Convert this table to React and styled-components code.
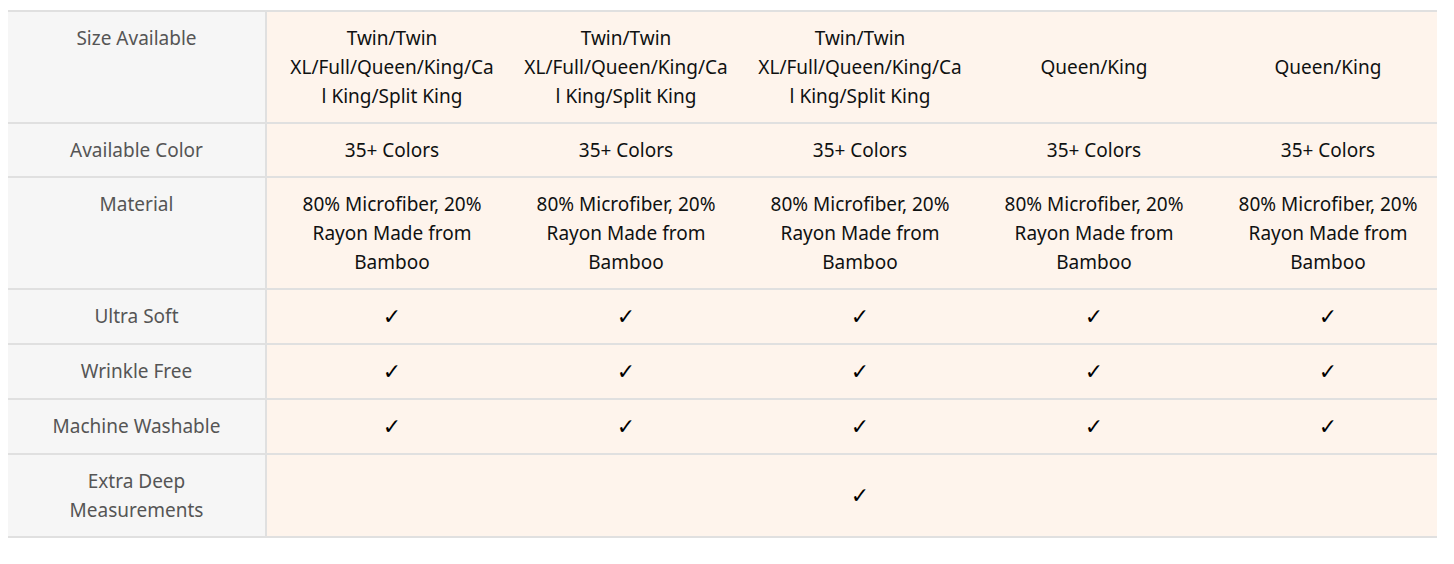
import styled, { createGlobalStyle } from "styled-components";

const Global = createGlobalStyle`
  body {
    margin: 8px;
    background: #fff;
    font-family: "Noto Sans", "DejaVu Sans", sans-serif;
  }
`;

const sizes = ["Twin/Twin", "XL/Full/Queen/King/Ca", "l King/Split King"];
const material = "80% Microfiber, 20% Rayon Made from Bamboo";

const rows = [
  { label: "Size Available", cells: [sizes, sizes, sizes, "Queen/King", "Queen/King"] },
  { label: "Available Color", cells: Array(5).fill("35+ Colors") },
  { label: "Material", cells: Array(5).fill(material) },
  { label: "Ultra Soft", cells: Array(5).fill("✓") },
  { label: "Wrinkle Free", cells: Array(5).fill("✓") },
  { label: "Machine Washable", cells: Array(5).fill("✓") },
  { label: "Extra Deep Measurements", cells: ["", "", "✓", "", ""] },
];

function renderCell(c) {
  if (c === "✓") return <Check>✓</Check>;
  if (Array.isArray(c))
    return c.map((line, i) => (
      <Line key={i}>{line}</Line>
    ));
  return c;
}

export default function App() {
  return (
    <>
      <Global />
      <Wrap>
        <Table>
          <colgroup>
            <col style={{ width: 259 }} />
            {Array.from({ length: 5 }).map((_, i) => (
              <col key={i} style={{ width: 234 }} />
            ))}
          </colgroup>
          <tbody>
            {rows.map((row) => (
              <tr key={row.label}>
                <Label>{row.label}</Label>
                {row.cells.map((c, i) => (
                  <Cell key={i}>{renderCell(c)}</Cell>
                ))}
              </tr>
            ))}
          </tbody>
        </Table>
      </Wrap>
    </>
  );
}

const Wrap = styled.div`
  padding-top: 2px;
`;

const Table = styled.table`
  width: 1429px;
  table-layout: fixed;
  border-collapse: separate;
  border-spacing: 0;
  border-top: 2px solid #e0e0e0;
  font-size: 19px;
  line-height: 29px;
`;

const Label = styled.td`
  background: #f6f6f6;
  color: #555;
  text-align: center;
  vertical-align: top;
  padding: 12px 16px 11px 16px;
  border-right: 2px solid #e0e0e0;
  border-bottom: 2px solid #e0e0e0;
`;

const Cell = styled.td`
  background: #fef4ec;
  color: #0f1111;
  text-align: center;
  vertical-align: middle;
  padding: 12px 0 11px 16px;
  border-bottom: 2px solid #e0e0e0;
`;

const Line = styled.div`
  white-space: nowrap;
`;

const Check = styled.span`
  font-family: "DejaVu Sans", sans-serif;
  font-weight: bold;
  font-size: 22px;
  color: #000;
`;
